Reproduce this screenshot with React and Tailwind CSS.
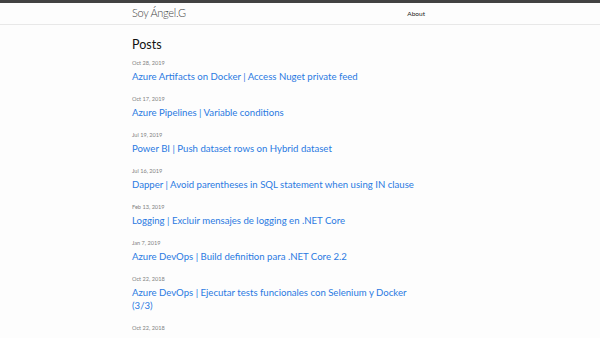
import React from "react";

const POSTS = [
  { date: "Oct 28, 2019", title: "Azure Artifacts on Docker | Access Nuget private feed" },
  { date: "Oct 17, 2019", title: "Azure Pipelines | Variable conditions" },
  { date: "Jul 19, 2019", title: "Power BI | Push dataset rows on Hybrid dataset" },
  { date: "Jul 16, 2019", title: "Dapper | Avoid parentheses in SQL statement when using IN clause" },
  { date: "Feb 13, 2019", title: "Logging | Excluir mensajes de logging en .NET Core" },
  { date: "Jan 7, 2019", title: "Azure DevOps | Build definition para .NET Core 2.2" },
  { date: "Oct 22, 2018", title: "Azure DevOps | Ejecutar tests funcionales con Selenium y Docker (3/3)" },
  { date: "Oct 22, 2018", title: "Azure DevOps | Ejecutar tests funcionales con Selenium y Docker (2/3)" },
];

export default function App() {
  return (
    <div className="h-[338px] overflow-hidden bg-[#fdfdfd] text-[#111] font-['Segoe_UI','Lato',sans-serif]">
      <header className="border-t-[3px] border-[#424242] border-b border-b-[#e8e8e8] h-[25px]">
        <div className="ml-[132px] w-[293px] h-full flex items-center justify-between">
          <a className="text-[11px] font-light tracking-[-0.3px] text-[#424242]">Soy Ángel.G</a>
          <a className="text-[6.5px] text-[#222]">About</a>
        </div>
      </header>

      <main className="ml-[132px] w-[290px] pt-[12px]">
        <h2 className="text-[12.5px] leading-[16px] mb-[6px]">Posts</h2>
        <ul>
          {POSTS.map((p, i) => (
            <li key={i} className="mb-[12.5px]">
              <span className="block text-[5.6px] leading-[8px] mb-[2.5px] text-[#828282]">{p.date}</span>
              <a className="block text-[9.6px] leading-[13px] text-[#2a7ae2]">{p.title}</a>
            </li>
          ))}
        </ul>
      </main>
    </div>
  );
}
